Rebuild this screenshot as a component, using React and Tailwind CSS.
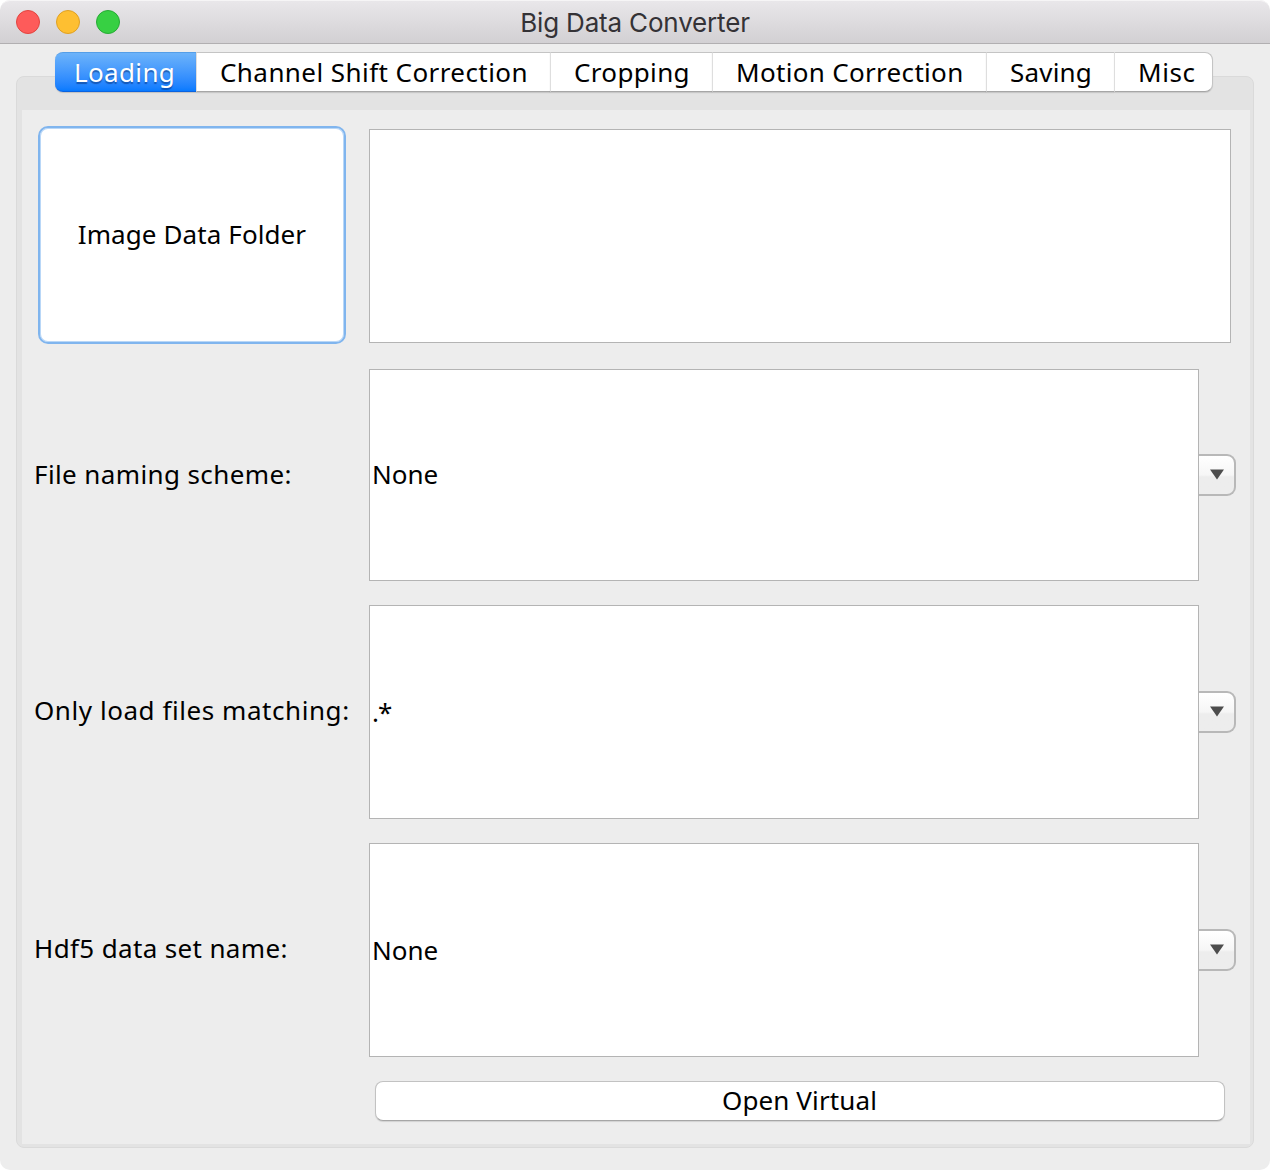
import React from "react";

const tabs = [
  { label: "Channel Shift Correction", box: "w-[354px] pl-[23px] tracking-[0.43px]" },
  { label: "Cropping", box: "w-[162px] pl-[23px] tracking-[0.35px]" },
  { label: "Motion Correction", box: "w-[274px] pl-[23px] tracking-[0.32px]" },
  { label: "Saving", box: "w-[128px] pl-[23px] tracking-[0.2px]" },
  { label: "Misc", box: "w-[99px] pl-[23px] tracking-[0.6px] rounded-r-[8px] border-r border-r-[#c4c4c4]" },
];

const fields = [
  { label: "File naming scheme:", value: "None", tracking: "tracking-[0.39px]", row: "mt-[25px] h-[212px]", labelPos: "pb-[2px]", valuePos: "pb-[2px]" },
  { label: "Only load files matching:", value: ".*", tracking: "tracking-[0.56px]", row: "mt-[24px] h-[214px]", labelPos: "pb-[4px]", valuePos: "tracking-[-1px]" },
  { label: "Hdf5 data set name:", value: "None", tracking: "tracking-[0.36px]", row: "mt-[24px] h-[214px]", labelPos: "pb-[4px]", valuePos: "" },
];

function TitleBar() {
  return (
    <header className="grid h-[44px] shrink-0 grid-cols-[1fr_auto_1fr] items-center rounded-t-[10px] border-t border-b border-t-[#f6f5f6] border-b-[#b1afb1] bg-linear-to-b from-[#e9e7ea] to-[#d2d0d3] px-4">
      <div className="flex gap-4">
        <span className="size-6 rounded-full border border-[#e2443f] bg-[#fe5b5a]" />
        <span className="size-6 rounded-full border border-[#dfa023] bg-[#febf31]" />
        <span className="size-6 rounded-full border border-[#27aa35] bg-[#37d043]" />
      </div>
      <h1 className="pt-[2px] font-['Inter',sans-serif] text-[26px] leading-8 tracking-[-0.17px] text-[#343236]">Big Data Converter</h1>
    </header>
  );
}

function TabStrip() {
  return (
    <nav className="relative z-10 ml-[55px] flex h-[41px] w-[1158px] leading-[38px] whitespace-nowrap">
      <button className="flex h-[40px] w-[141px] items-start rounded-l-[8px] border-t border-b border-t-[#549ee8] border-b-[#0a63e0] bg-linear-to-b from-[#6cb3fa] to-[#067aff] pl-[19px] tracking-[0.35px] text-white shadow-[0_1px_1px_rgba(0,0,0,0.15)] [text-shadow:0_2px_1px_rgba(0,40,110,0.5)]">
        Loading
      </button>
      {tabs.map((t) => (
        <button
          key={t.label}
          className={`flex h-[40px] items-start border-t border-b border-l border-t-[#c4c4c4] border-b-[#a6a6a6] border-l-[#dedede] bg-white shadow-[0_1px_1px_rgba(0,0,0,0.12)] ${t.box}`}
        >
          {t.label}
        </button>
      ))}
    </nav>
  );
}

function ArrowButton() {
  return (
    <button className="flex h-[42px] w-[37px] items-center justify-center rounded-r-[9px] border-2 border-l-0 border-[#b8b8b8] bg-linear-to-b from-white from-0% via-[#f6f6f6] via-50% to-[#ededed] to-55% pb-px">
      <svg width="14" height="11" viewBox="0 0 14 11" className="block">
        <path d="M0 0.5H14L7 10.5Z" fill="#4d4d4d" />
      </svg>
    </button>
  );
}

function ComboRow({ field }) {
  return (
    <div className={`flex items-stretch ${field.row}`}>
      <label className={`flex w-[347px] items-center pl-[12px] whitespace-nowrap ${field.tracking} ${field.labelPos}`}>{field.label}</label>
      <div className={`flex w-[830px] items-center border border-[#b4b4b4] bg-white pl-[2px] ${field.valuePos}`}>{field.value}</div>
      <div className="flex items-center">
        <ArrowButton />
      </div>
    </div>
  );
}

export default function App() {
  return (
    <div className="h-[1170px] w-[1270px] bg-white">
      <div className="flex h-full flex-col overflow-hidden rounded-[10px] bg-[#ededed] font-['Noto_Sans',sans-serif] text-[26px] leading-8 text-black">
        <TitleBar />
        <main className="flex flex-1 flex-col pt-2">
          <TabStrip />
          <section className="mx-4 -mt-[17px] h-[1072px] rounded-[8px] border border-[#dadada] bg-[#e3e3e3] pt-[33px] pr-[3px] pl-[5px]">
            <div className="h-[1034px] w-[1228px] bg-[#ededed]">
              <div className="flex pt-[16px]">
                <button className="ml-[16px] h-[218px] w-[308px] rounded-[10px] border-2 border-[#80b5ee] bg-white pb-[2px] tracking-[0.1px] shadow-[inset_0_0_0_1px_#b9d7f7]">
                  Image Data Folder
                </button>
                <div className="mt-[3px] ml-[23px] h-[214px] w-[862px] border border-[#b4b4b4] bg-white" />
              </div>
              {fields.map((f) => (
                <ComboRow key={f.label} field={f} />
              ))}
              <button className="mt-[24px] ml-[353px] flex h-[40px] w-[850px] items-start justify-center rounded-[8px] border border-[#c2c2c2] border-b-[#a6a6a6] bg-white pr-px leading-[36px] tracking-[0.12px] shadow-[0_1px_1px_rgba(0,0,0,0.12)]">
                Open Virtual
              </button>
            </div>
          </section>
        </main>
      </div>
    </div>
  );
}
